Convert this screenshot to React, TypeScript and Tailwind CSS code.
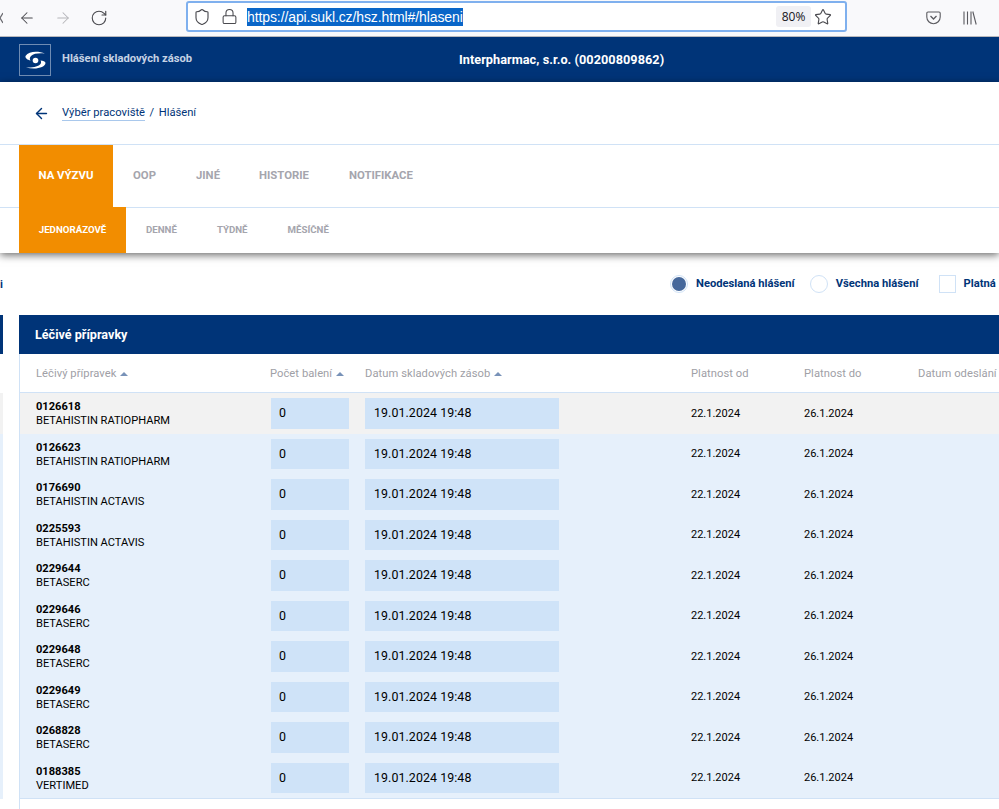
import React from "react";
import { ArrowLeft, ArrowRight, RotateCw, Shield, Lock, Star } from "lucide-react";

const rows = [
  ["0126618", "BETAHISTIN RATIOPHARM"],
  ["0126623", "BETAHISTIN RATIOPHARM"],
  ["0176690", "BETAHISTIN ACTAVIS"],
  ["0225593", "BETAHISTIN ACTAVIS"],
  ["0229644", "BETASERC"],
  ["0229646", "BETASERC"],
  ["0229648", "BETASERC"],
  ["0229649", "BETASERC"],
  ["0268828", "BETASERC"],
  ["0188385", "VERTIMED"],
];

const gridCols = "grid grid-cols-[235px_94px_326px_113px_114px_1fr] pl-[16px] items-center";

function Sort() {
  return (
    <svg width="8" height="4" viewBox="0 0 8 4" className="ml-[4px] inline-block align-middle">
      <polygon points="4,0 8,4 0,4" fill="#7892b8" />
    </svg>
  );
}

function Logo() {
  return (
    <div className="w-[32px] h-[32px] border border-[#6f8cb3] flex items-center justify-center">
      <svg width="24" height="24" viewBox="0 0 24 24">
        <path d="M2.5 8 C6 3 15 3 22 5.5 C16 5 10.5 5.5 8 8 C6.5 9.5 6.5 11 7.5 12.5 C4.5 12 2 10 2.5 8 Z" fill="#fff" />
        <path d="M22.5 15 C22 19.5 13 22 3 19.5 C10 20 15.5 18.5 17.5 16 C18.5 14.5 18 13 17.5 12.5 C20 12.5 22.5 13.5 22.5 15 Z" fill="#fff" />
        <circle cx="12.5" cy="12.5" r="2.8" fill="#fff" />
      </svg>
    </div>
  );
}

export default function App() {
  return (
    <div className="h-[809px] w-[999px] overflow-hidden bg-white font-['Roboto',sans-serif] text-black">
      {/* browser toolbar */}
      <div className="h-[37px] bg-[#f9f9fb] border-b border-[#b9b9bd] flex items-start text-[#4a4a4f]">
        <div className="w-[18px] h-[36px] flex items-center">
          <svg width="3" height="12" viewBox="0 0 3 12"><path d="M3 1 L0 6 L3 11" fill="none" stroke="#6b6b70" strokeWidth="1.3" /></svg>
        </div>
        <div className="w-[36px] h-[36px] flex items-center"><ArrowLeft size={18} strokeWidth={1.4} /></div>
        <div className="w-[36px] h-[36px] flex items-center text-[#b5b5b9]"><ArrowRight size={18} strokeWidth={1.4} /></div>
        <div className="w-[96px] h-[36px] flex items-center"><RotateCw size={18} strokeWidth={1.5} /></div>
        <div className="mt-[1px] w-[661px] h-[31px] bg-white border-2 border-[#7fb0ee] rounded-[3px] flex items-center shrink-0">
          <Shield size={18} strokeWidth={1.5} className="ml-[5px] shrink-0" />
          <Lock size={17} strokeWidth={1.5} className="ml-[10px] shrink-0" />
          <span className="ml-[9px] h-[18px] leading-[18px] bg-[#0a66c8] text-white text-[14px] font-['Liberation_Sans',sans-serif] whitespace-nowrap overflow-hidden w-[216px] shrink-0 tracking-[-0.1px]">https://api.sukl.cz/hsz.html#/hlaseni</span>
          <span className="ml-[313px] w-[35px] h-[21px] rounded-[3px] bg-[#f0f0f4] text-[12px] leading-[21px] text-center text-[#15141a] font-['Open_Sans',sans-serif] shrink-0">80%</span>
          <Star size={18} strokeWidth={1.5} className="ml-[3px] shrink-0" />
        </div>
        <div className="w-[79px] h-[36px] flex items-center pl-[79px] shrink-0">
          <svg width="15" height="14" viewBox="0 0 15 14" className="shrink-0">
            <path d="M2 1 H13 A1.2 1.2 0 0 1 14.2 2.2 V6 A6.7 6.7 0 0 1 0.8 6 V2.2 A1.2 1.2 0 0 1 2 1 Z" fill="none" stroke="#5b5b60" strokeWidth="1.1" />
            <path d="M4.5 5 L7.5 8 L10.5 5" fill="none" stroke="#5b5b60" strokeWidth="1.3" />
          </svg>
          <svg width="14" height="14" viewBox="0 0 14 14" className="ml-[22px] shrink-0">
            <path d="M1 0.5 V13.5 M4.5 0.5 V13.5 M8 0.5 V13.5 M9.8 0.5 L13.2 13.5" fill="none" stroke="#5b5b60" strokeWidth="1.1" />
          </svg>
        </div>
      </div>

      {/* app header */}
      <div className="h-[45px] bg-[#003478] flex items-center relative pl-[19px]">
        <Logo />
        <span className="ml-[11px] text-[#c5d2e4] text-[11.2px] font-bold">Hlášení skladových zásob</span>
        <span className="absolute left-[459px] text-white text-[12.7px] font-bold tracking-[0.05px] whitespace-nowrap">Interpharmac, s.r.o. (00200809862)</span>
      </div>

      {/* shadowed nav block */}
      <div className="relative shadow-[0_2px_8px_rgba(0,0,0,0.6)] bg-white">
        <div className="h-[62px] flex items-center pl-[33px] border-b border-[#d0e2f6] box-content">
          <ArrowLeft size={17} strokeWidth={2} className="text-[#003478]" />
          <span className="ml-[12px] text-[11.2px] text-[#003478] border-b border-[#a9c8ec] leading-[14px] tracking-[0.02px]">Výběr pracoviště</span>
          <span className="mx-[4.5px] text-[11.2px] text-[#003478]">/</span>
          <span className="text-[11.2px] text-[#003478]">Hlášení</span>
        </div>
        <div className="h-[62px] flex pl-[19px] border-b border-[#d0e2f6] box-content">
          <div className="h-[63px] w-[94px] pb-[1px] bg-[#f28d00] text-white text-[11.4px] font-bold flex items-center justify-center whitespace-nowrap">NA VÝZVU</div>
          {[["OOP", "ml-[20px]"], ["JINÉ", "ml-[40px]"], ["HISTORIE", "ml-[39px]"], ["NOTIFIKACE", "ml-[40px]"]].map(([t, m]) => (
            <div key={t} className={`${m} text-[#a5a5ad] text-[11.35px] font-bold flex items-center h-[63px] pb-[1px]`}>{t}</div>
          ))}
        </div>
        <div className="h-[45px] flex pl-[19px]">
          <div className="-mt-[1px] h-[46px] w-[107px] bg-[#f28d00] text-white text-[9.7px] font-bold flex items-center justify-center">JEDNORÁZOVĚ</div>
          {[["DENNĚ", "ml-[20px]"], ["TÝDNĚ", "ml-[40px]"], ["MĚSÍČNĚ", "ml-[40px]"]].map(([t, m]) => (
            <div key={t} className={`${m} text-[#a5a5ad] text-[9.7px] font-bold flex items-center`}>{t}</div>
          ))}
        </div>
      </div>

      {/* page body */}
      <div className="flex">
        <div className="w-[3px] shrink-0 overflow-hidden">
          <div className="h-[62px] flex items-end pb-[24px] text-[#003478] text-[11px] font-bold leading-[13px]">i</div>
          <div className="h-[39px] bg-[#003478]" />
          <div className="h-[39px]" />
          <div className="h-[41px] bg-[#f2f2f2]" />
          <div className="h-[365px] bg-[#e6f0fb]" />
        </div>
        <div className="ml-[16px] flex-1 min-w-0 overflow-hidden">
          {/* filters */}
          <div className="h-[62px] flex items-center pl-[651px] text-[#003478] text-[11.2px] font-bold whitespace-nowrap">
            <span className="w-[18px] h-[18px] rounded-full border border-[#d0e2f6] flex items-center justify-center shrink-0">
              <span className="w-[14px] h-[14px] rounded-full bg-[#46689b]" />
            </span>
            <span className="ml-[8px]">Neodeslaná hlášení</span>
            <span className="ml-[15px] w-[18px] h-[18px] rounded-full border border-[#d0e2f6] shrink-0" />
            <span className="ml-[8px] tracking-[0.02px]">Všechna hlášení</span>
            <span className="ml-[20px] w-[17px] h-[18px] border border-[#d0e2f6] shrink-0" />
            <span className="ml-[8px]">Platná</span>
          </div>

          {/* table */}
          <div className="h-[39px] pt-[2px] bg-[#003478] text-white text-[12.6px] font-bold flex items-center pl-[16px]">Léčivé přípravky</div>
          <div className="border-l border-[#d0e2f6] h-[456px]">
            <div className={`${gridCols} h-[39px] pt-[2px] border-b border-[#d0e2f6] text-[#a0a0a6] text-[11.2px] tracking-[0.05px] whitespace-nowrap`}>
              <div>Léčivý přípravek<Sort /></div>
              <div className="-ml-[1px]">Počet balení<Sort /></div>
              <div>Datum skladových zásob<Sort /></div>
              <div>Platnost od</div>
              <div>Platnost do</div>
              <div>Datum odeslání</div>
            </div>
            <div className="border-b border-[#d0e2f6]">
              {rows.map(([code, name], i) => (
                <div key={code} className={`${gridCols} h-[40.5px] ${i === 0 ? "bg-[#f2f2f2]" : "bg-[#e6f0fb]"}`}>
                  <div className="text-[11.1px] leading-[14px] whitespace-nowrap pt-[2px]">
                    <div className="font-bold">{code}</div>
                    <div>{name}</div>
                  </div>
                  <div>
                    <div className="w-[78px] h-[30.5px] pt-[1px] bg-[#cfe3f8] flex items-center pl-[8px] text-[12.4px]">0</div>
                  </div>
                  <div>
                    <div className="w-[194px] h-[30.5px] pt-[1px] bg-[#cfe3f8] flex items-center pl-[9px] text-[12.4px] tracking-[0.08px]">19.01.2024 19:48</div>
                  </div>
                  <div className="text-[11px] pt-[1px]">22.1.2024</div>
                  <div className="text-[11px] pt-[1px]">26.1.2024</div>
                  <div />
                </div>
              ))}
            </div>
          </div>
        </div>
      </div>
    </div>
  );
}
